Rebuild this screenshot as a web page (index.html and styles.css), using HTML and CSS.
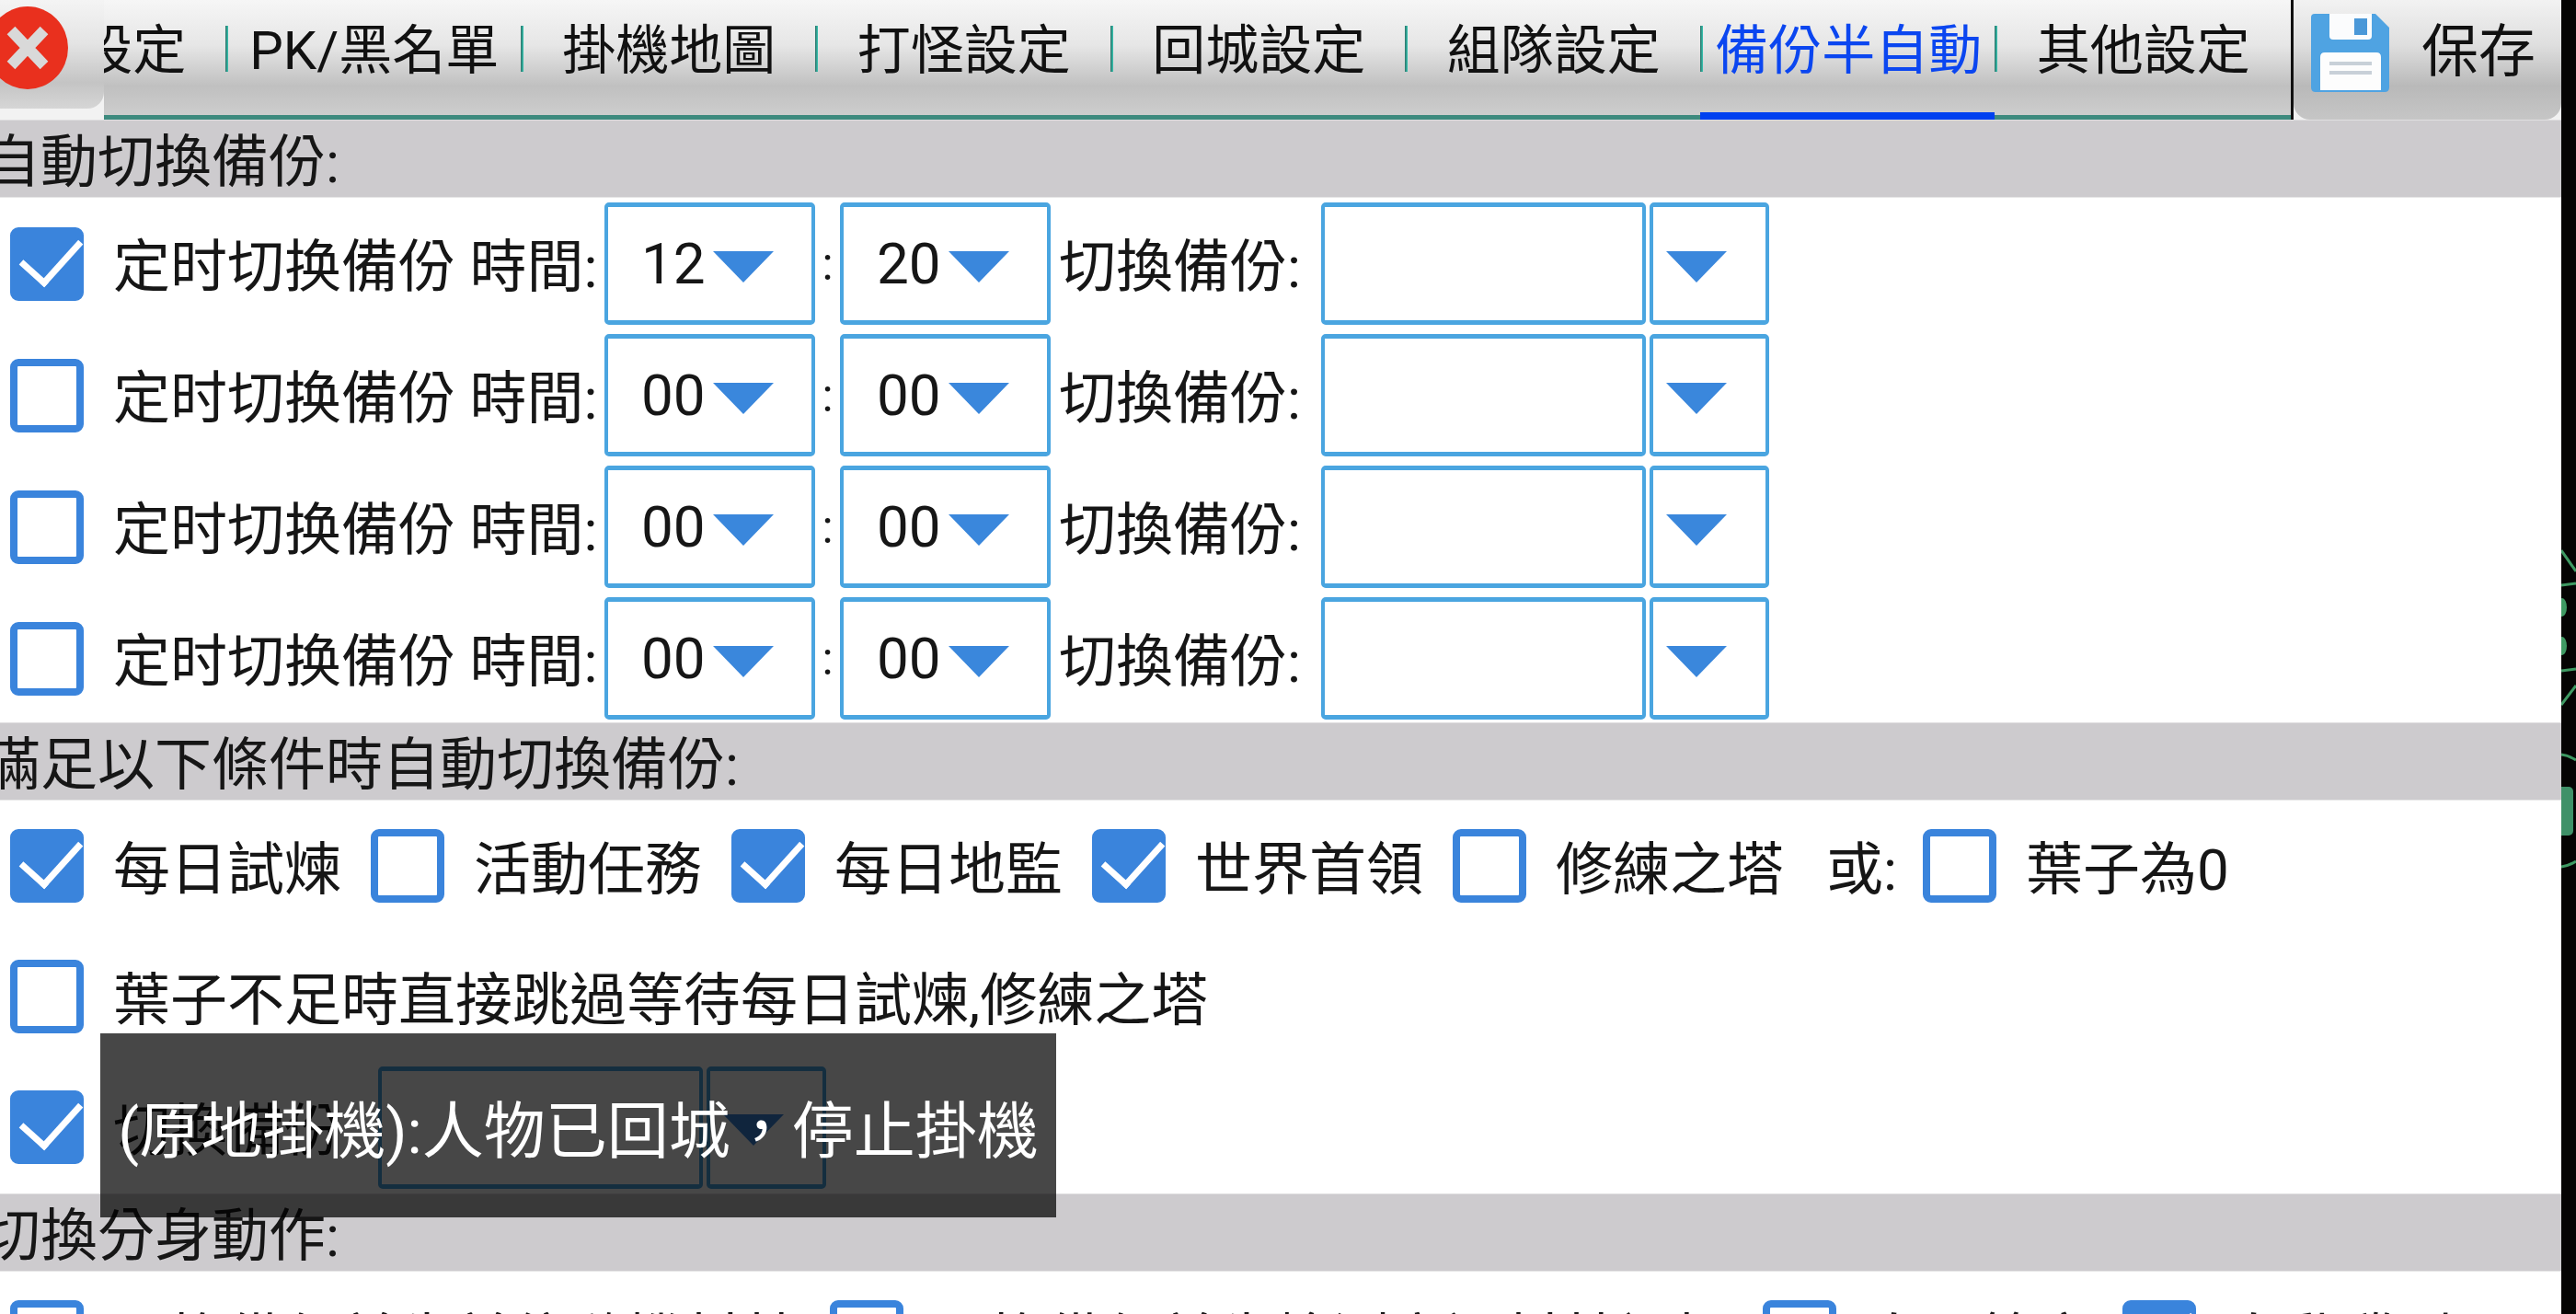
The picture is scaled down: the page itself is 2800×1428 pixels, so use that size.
FILE: index.html
```html
<!DOCTYPE html>
<html lang="zh-Hant">
  <head>
    <meta charset="UTF-8" />
    <title>備份半自動</title>
    <link rel="stylesheet" href="styles.css">
  </head>
  <body>
    <div class="app">
      <div class="topbar">
        <div class="close">
          <svg class="close_icon" viewBox="0 0 80 90">
            <ellipse cx="30" cy="45" rx="44" ry="45" fill="#e9301e" />
            <path d="M12 26 L48 64 M48 26 L12 64" stroke="#d9d9d9" stroke-width="12" />
          </svg>
        </div>
        <div class="tabs">
          <div class="tab_strip">
            <span class="tab">基本設定</span><i class="sep"></i>
            <span class="tab">PK/黑名單</span><i class="sep"></i>
            <span class="tab">掛機地圖</span><i class="sep"></i>
            <span class="tab">打怪設定</span><i class="sep"></i>
            <span class="tab">回城設定</span><i class="sep"></i>
            <span class="tab">組隊設定</span><i class="sep"></i>
            <span class="tab active">備份半自動</span><i class="sep"></i>
            <span class="tab">其他設定</span>
          </div>
        </div>
        <div class="save">
          <svg class="save_icon" viewBox="0 0 85 85">
            <path d="M4 0 H70 L85 15 V80 Q85 85 80 85 H5 Q0 85 0 80 V4 Q0 0 4 0 Z" fill="#4fa3e2" />
            <path d="M20 0 H66 V24 Q66 28 62 28 H24 Q20 28 20 24 Z" fill="#fbfcfd" />
            <rect x="47" y="5" width="14" height="18" fill="#4a98d8" />
            <path d="M10 47 Q10 42 15 42 H71 Q76 42 76 47 V83 H10 Z" fill="#fdfdfd" />
            <rect x="20" y="52" width="46" height="4" fill="#c8d0d8" />
            <rect x="20" y="62" width="46" height="4" fill="#c8d0d8" />
          </svg>
          <span>保存</span>
        </div>
      </div>

      <div class="section"><span>自動切換備份:</span></div>
      <div class="time_rows">
        <div class="row">
          <i class="cb on"></i>
          <span class="label when">定时切换備份 時間:</span>
          <div class="box time"><span>12</span><i class="arrow"></i></div>
          <span class="colon">:</span>
          <div class="box time"><span>20</span><i class="arrow"></i></div>
          <span class="label switch">切換備份:</span>
          <div class="box name"></div>
          <div class="box drop"><i class="arrow"></i></div>
        </div>
        <div class="row">
          <i class="cb"></i>
          <span class="label when">定时切换備份 時間:</span>
          <div class="box time"><span>00</span><i class="arrow"></i></div>
          <span class="colon">:</span>
          <div class="box time"><span>00</span><i class="arrow"></i></div>
          <span class="label switch">切換備份:</span>
          <div class="box name"></div>
          <div class="box drop"><i class="arrow"></i></div>
        </div>
        <div class="row">
          <i class="cb"></i>
          <span class="label when">定时切换備份 時間:</span>
          <div class="box time"><span>00</span><i class="arrow"></i></div>
          <span class="colon">:</span>
          <div class="box time"><span>00</span><i class="arrow"></i></div>
          <span class="label switch">切換備份:</span>
          <div class="box name"></div>
          <div class="box drop"><i class="arrow"></i></div>
        </div>
        <div class="row">
          <i class="cb"></i>
          <span class="label when">定时切换備份 時間:</span>
          <div class="box time"><span>00</span><i class="arrow"></i></div>
          <span class="colon">:</span>
          <div class="box time"><span>00</span><i class="arrow"></i></div>
          <span class="label switch">切換備份:</span>
          <div class="box name"></div>
          <div class="box drop"><i class="arrow"></i></div>
        </div>
      </div>

      <div class="section"><span>滿足以下條件時自動切換備份:</span></div>
      <div class="cond_rows">
        <div class="row">
          <i class="cb on"></i><span class="label item">每日試煉</span>
          <i class="cb"></i><span class="label item">活動任務</span>
          <i class="cb on"></i><span class="label item">每日地監</span>
          <i class="cb on"></i><span class="label item">世界首領</span>
          <i class="cb"></i><span class="label item">修練之塔</span>
          <span class="label or">或:</span>
          <i class="cb"></i><span class="label">葉子為0</span>
        </div>
        <div class="row">
          <i class="cb"></i><span class="label">葉子不足時直接跳過等待每日試煉,修練之塔</span>
        </div>
        <div class="row">
          <i class="cb on"></i><span class="label pick">切換備份</span>
          <div class="box name"></div>
          <div class="box drop"><i class="arrow"></i></div>
        </div>
      </div>

      <div class="section"><span>切換分身動作:</span></div>
      <div class="row last_row">
        <i class="cb"></i><span class="label act1">切換備份前先前往隨機村莊</span>
        <i class="cb"></i><span class="label act2">切換備份前先檢測穿過村莊裡怪</span>
        <i class="cb"></i><span class="label act3">自開管家</span>
        <i class="cb on"></i><span class="label">自動騰型</span>
      </div>

      <div class="toast">(原地掛機):人物已回城，停止掛機</div>
    </div>

    <div class="strip">
      <svg viewBox="0 0 16 1428" width="16" height="1428">
        <g fill="none" stroke="#3f9a63" stroke-width="3">
          <path d="M0 598 L16 621" />
          <path d="M0 636 L16 634" />
          <path d="M0 729 L16 727" />
          <path d="M0 766 L16 745" />
          <path d="M0 820 Q8 821 16 826" />
          <path d="M0 942 Q8 941 16 936" />
        </g>
        <ellipse cx="1" cy="660" rx="5" ry="10" fill="#3f9a63" />
        <ellipse cx="1" cy="702" rx="5" ry="10" fill="#3f9a63" />
        <rect x="-6" y="855" width="19" height="53" rx="5" fill="#3f9168" />
      </svg>
    </div>
  </body>
</html>
```

FILE: styles.css
```css
* {
  box-sizing: border-box;
}

html,
body {
  margin: 0;
  height: 1428px;
  overflow: hidden;
}

body {
  display: flex;
  background: #000;
  font-family: Roboto, "Noto Sans CJK TC", sans-serif;
  font-size: 62px;
  color: #161616;
}

.app {
  position: relative;
  width: 2784px;
  height: 1428px;
  overflow: hidden;
  background: #fff;
}

.strip {
  width: 16px;
  background: #050403;
}

.strip svg {
  display: block;
}

/* top tab bar */
.topbar {
  display: flex;
  height: 130px;
  background: #f2f2f2;
}

.close {
  width: 113px;
  height: 118px;
  flex: none;
  padding-top: 7px;
  border-bottom-right-radius: 18px;
  background: linear-gradient(#f4f4f4, #e4e4e4 40%, #c4c4c4 76%, #d6d6d6);
}

.close_icon {
  display: block;
  width: 80px;
  height: 90px;
}

.tabs {
  width: 2380px;
  flex: none;
  overflow: hidden;
  border-right: 3px solid #111;
  background:
    linear-gradient(#3d8a7e, #3d8a7e) bottom / 100% 5px no-repeat,
    linear-gradient(#f6f6f6, #e6e6e6 38%, #c0c0c0 72%, #cfcfcf 100%);
}

.tab_strip {
  display: flex;
  align-items: center;
  height: 106px;
  margin-left: -185.5px;
  color: #111;
  font-size: 58px;
  line-height: 80px;
  white-space: nowrap;
}

.tab {
  position: relative;
  width: 317.5px;
  flex: none;
  padding-top: 4px;
  text-align: center;
}

.tab.active {
  color: #0b46f0;
}

.tab.active::after {
  content: "";
  position: absolute;
  left: -3px;
  right: 0;
  top: 111px;
  height: 8px;
  background: #0040f0;
}

.sep {
  width: 3px;
  height: 50px;
  flex: none;
  background: linear-gradient(90deg, #2e6f66, #35c8b4);
}

.save {
  flex: 1;
  display: flex;
  align-items: flex-start;
  height: 130px;
  padding: 15px 0 0 19px;
  border-bottom-left-radius: 18px;
  border-bottom-right-radius: 18px;
  background: linear-gradient(#f2f2f2, #dedede 38%, #b9b9b9 72%, #c6c6c6 100%);
  color: #111;
}

.save_icon {
  width: 85px;
  height: 85px;
  flex: none;
}

.save span {
  margin: -9px 0 0 35px;
}

/* section headers */
.section {
  display: flex;
  align-items: center;
  height: 85px;
  padding-bottom: 3px;
  background: #cdcbce;
  border-top: 1px solid #e0dfe0;
  border-bottom: 1px solid #e6e6e6;
}

.section span {
  margin-left: -18px;
}

/* rows */
.row {
  display: flex;
  align-items: center;
  padding-left: 11px;
  white-space: nowrap;
}

.time_rows {
  display: flex;
  flex-direction: column;
  gap: 10px;
  padding: 5px 0 3px;
}

.time_rows .row {
  height: 133px;
}

.cond_rows {
  display: flex;
  flex-direction: column;
  height: 427px;
}

.cond_rows .row {
  height: 142px;
}

.last_row {
  height: 142px;
}

.cb {
  position: relative;
  width: 80px;
  height: 80px;
  flex: none;
  margin-right: 32px;
  border: 8px solid #3a84dc;
  border-radius: 9px;
  background: #fff;
}

.cb.on {
  background: #3a84dc;
}

.cb.on::after {
  content: "";
  position: absolute;
  left: 18px;
  top: -10px;
  width: 30px;
  height: 56px;
  border-right: 7px solid #fff;
  border-bottom: 7px solid #fff;
  transform: rotate(42deg);
}

.label {
  flex: none;
  margin-top: -3px;
}

.item {
  width: 280px;
}

.or {
  width: 105px;
  margin-left: 14px;
}

.when {
  width: 534px;
}

.pick {
  width: 288px;
}

.box {
  display: flex;
  align-items: center;
  height: 133px;
  flex: none;
  border: 4px solid #4aa5e0;
  border-top-width: 5px;
  border-bottom-width: 5px;
  border-radius: 5px;
  background: #fff;
}

.time {
  width: 229px;
  padding-left: 36px;
}

.time span {
  width: 78px;
  flex: none;
}

.colon {
  width: 27px;
  flex: none;
  text-align: center;
  font-size: 50px;
}

.switch {
  width: 285px;
  margin-left: 9px;
}

.name {
  width: 353px;
}

.drop {
  width: 130px;
  margin-left: 4px;
  padding-left: 14px;
}

.arrow {
  display: block;
  width: 0;
  height: 0;
  flex: none;
  margin-top: 6px;
  border-left: 33px solid transparent;
  border-right: 33px solid transparent;
  border-top: 34px solid #3a87dc;
}

.act1 {
  width: 779px;
}

.act2 {
  width: 902px;
}

.act3 {
  width: 279px;
}

/* toast over the page */
.toast {
  position: absolute;
  left: 109px;
  top: 1123px;
  display: flex;
  align-items: center;
  justify-content: center;
  width: 1039px;
  height: 200px;
  background: rgba(0, 0, 0, 0.72);
  color: #fff;
  font-size: 67px;
  white-space: nowrap;
}
```
